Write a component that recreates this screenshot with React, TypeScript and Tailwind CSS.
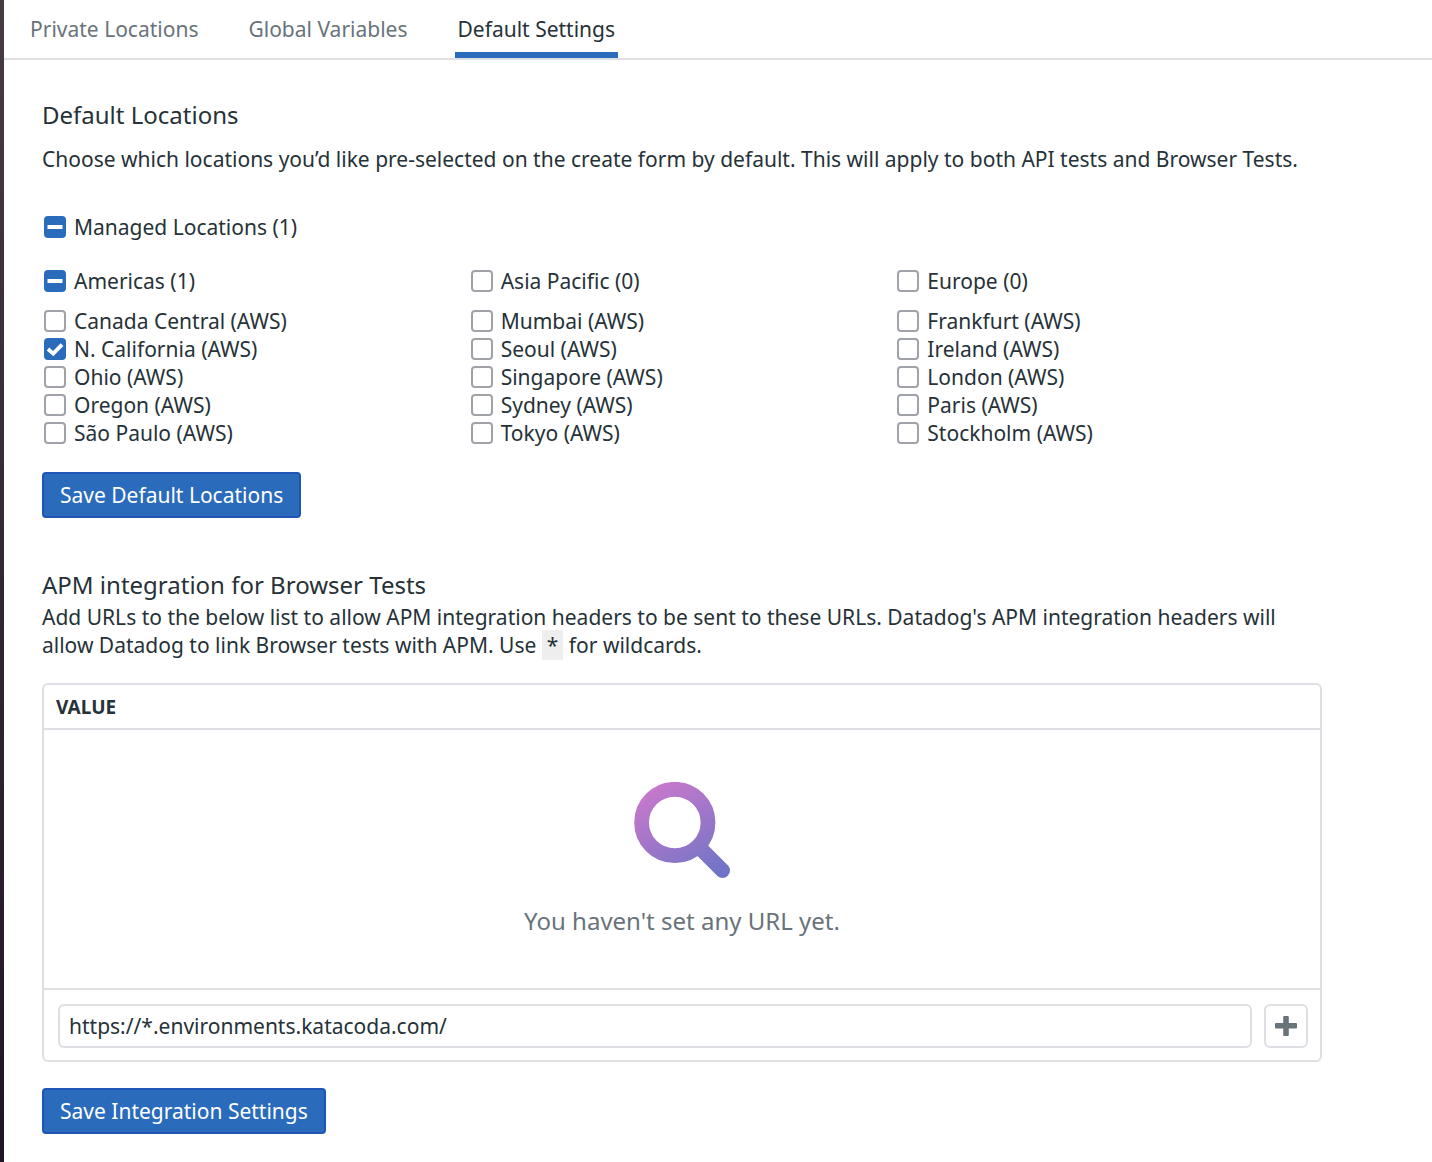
import { useEffect, useRef, useState } from "react";

const groups = [
  { name: "Americas", places: ["Canada Central", "N. California", "Ohio", "Oregon", "São Paulo"] },
  { name: "Asia Pacific", places: ["Mumbai", "Seoul", "Singapore", "Sydney", "Tokyo"] },
  { name: "Europe", places: ["Frankfurt", "Ireland", "London", "Paris", "Stockholm"] },
];
const allPlaces = groups.flatMap((g) => g.places);

type CheckProps = { label: string; checked: boolean; mixed?: boolean; onToggle: () => void };

function Check({ label, checked, mixed = false, onToggle }: CheckProps) {
  const ref = useRef<HTMLInputElement>(null);
  useEffect(() => {
    if (ref.current) ref.current.indeterminate = mixed;
  }, [mixed]);
  return (
    <label className="flex h-7 items-center gap-1.5">
      <span className="relative grid h-6 w-[26px] shrink-0 place-items-center">
        <input
          ref={ref}
          type="checkbox"
          checked={checked}
          onChange={onToggle}
          className="h-[22px] w-[22px] appearance-none rounded border-2 border-[#9fa3a9] bg-white checked:border-[#2a6bbb] checked:bg-[#2a6bbb] indeterminate:border-[#2a6bbb] indeterminate:bg-[#2a6bbb]"
        />
        {(checked || mixed) && (
          <svg viewBox="0 0 26 24" className="pointer-events-none absolute inset-0 h-6 w-[26px]" fill="none" stroke="white">
            {mixed ? <path d="M5.5 12H20.5" strokeWidth="4" /> : <path d="M6 12L11.2 16.6L20 7.6" strokeWidth="3.8" />}
          </svg>
        )}
      </span>
      {label}
    </label>
  );
}

function PrimaryButton({ children }: { children: string }) {
  return (
    <button type="button" className="h-[46px] rounded border-2 border-[#1f55b5] bg-[#2a6bbb] px-4 text-white">
      {children}
    </button>
  );
}

export default function App() {
  const [selected, setSelected] = useState<string[]>(["N. California"]);
  const [url, setUrl] = useState("https://*.environments.katacoda.com/");

  const count = (places: string[]) => places.filter((p) => selected.includes(p)).length;
  const toggle = (places: string[]) =>
    setSelected((s) =>
      places.every((p) => s.includes(p)) ? s.filter((p) => !places.includes(p)) : [...new Set([...s, ...places])]
    );
  const groupCheck = (name: string, places: string[]) => {
    const n = count(places);
    return (
      <Check
        label={`${name} (${n})`}
        checked={n === places.length}
        mixed={n > 0 && n < places.length}
        onToggle={() => toggle(places)}
      />
    );
  };

  return (
    <div className="flex min-h-screen bg-white font-['Noto_Sans',sans-serif] text-[21px] leading-7 text-[#263238]">
      <div className="w-1 shrink-0 bg-linear-to-b from-[#453c44] to-[#1f1525]" />
      <div className="min-w-0 flex-1">
        <nav className="flex h-[60px] gap-11 border-b-2 border-[#dedee4] pl-[23px] text-[#69737a]">
          <a href="#private" className="border-b-[6px] border-transparent px-[3px] pt-[15px]">Private Locations</a>
          <a href="#variables" className="border-b-[6px] border-transparent px-[3px] pt-[15px]">Global Variables</a>
          <a href="#defaults" aria-current="page" className="border-b-[6px] border-[#2a6bbb] px-[3px] pt-[15px] text-[#263238]">Default Settings</a>
        </nav>

        <main className="px-[38px] pt-[39px] pb-7">
          <div className="max-w-[1280px]">
            <section>
              <h2 className="text-2xl">Default Locations</h2>
              <p className="mt-3.5">
                Choose which locations you’d like pre-selected on the create form by default. This will apply to both API tests and Browser Tests.
              </p>
              <div className="mt-10">{groupCheck("Managed Locations", allPlaces)}</div>
              <div className="mt-[26px] grid grid-cols-3">
                {groups.map((g) => (
                  <div key={g.name}>
                    {groupCheck(g.name, g.places)}
                    <div className="mt-3">
                      {g.places.map((p) => (
                        <Check key={p} label={`${p} (AWS)`} checked={selected.includes(p)} onToggle={() => toggle([p])} />
                      ))}
                    </div>
                  </div>
                ))}
              </div>
              <div className="mt-[25px]">
                <PrimaryButton>Save Default Locations</PrimaryButton>
              </div>
            </section>

            <section className="mt-[51px]">
              <h2 className="text-2xl">APM integration for Browser Tests</h2>
              <p className="mt-0.5">
                Add URLs to the below list to allow APM integration headers to be sent to these URLs. Datadog's APM integration headers will allow Datadog to link Browser tests with APM. Use{" "}
                <code className="bg-[#eeeeee] px-[5px] py-px font-['Noto_Sans',sans-serif]">*</code> for wildcards.
              </p>
              <div className="mt-6 rounded-md border-2 border-[#dedee4]">
                <table className="w-full">
                  <thead>
                    <tr className="h-11 border-b-2 border-[#dedee4]">
                      <th scope="col" className="px-3 text-left text-[19px] font-bold">VALUE</th>
                    </tr>
                  </thead>
                  <tbody>
                    <tr>
                      <td className="pt-[52px] pb-[51px] text-center text-2xl text-[#69737a]">
                        <svg viewBox="0 0 96 96" className="mx-auto mb-[27px] size-24" fill="none" aria-hidden="true">
                          <defs>
                            <linearGradient id="lens" gradientUnits="userSpaceOnUse" x1="18" y1="4" x2="76" y2="96">
                              <stop stopColor="#c878cc" />
                              <stop offset="1" stopColor="#7074c6" />
                            </linearGradient>
                          </defs>
                          <circle cx="40.8" cy="40.5" r="33.2" stroke="url(#lens)" strokeWidth="14.8" />
                          <path d="M66 66L88.5 88.5" stroke="url(#lens)" strokeWidth="15" strokeLinecap="round" />
                        </svg>
                        You haven't set any URL yet.
                      </td>
                    </tr>
                  </tbody>
                </table>
                <div className="flex gap-3 border-t-2 border-[#dedee4] pt-3.5 pr-3 pb-3 pl-3.5">
                  <input
                    type="text"
                    aria-label="URL"
                    value={url}
                    onChange={(e) => setUrl(e.target.value)}
                    className="h-11 min-w-0 flex-1 rounded-md border-2 border-[#dedee4] px-[9px]"
                  />
                  <button type="button" aria-label="Add URL" className="grid size-11 place-items-center rounded-md border-2 border-[#dedee4] text-[#69737a]">
                    <svg viewBox="0 0 22 20" className="h-5 w-[22px]" fill="currentColor">
                      <rect y="7" width="22" height="5.5" rx="1" />
                      <rect x="8.2" width="5.6" height="20" rx="1" />
                    </svg>
                  </button>
                </div>
              </div>
              <div className="mt-[26px]">
                <PrimaryButton>Save Integration Settings</PrimaryButton>
              </div>
            </section>
          </div>
        </main>
      </div>
    </div>
  );
}
